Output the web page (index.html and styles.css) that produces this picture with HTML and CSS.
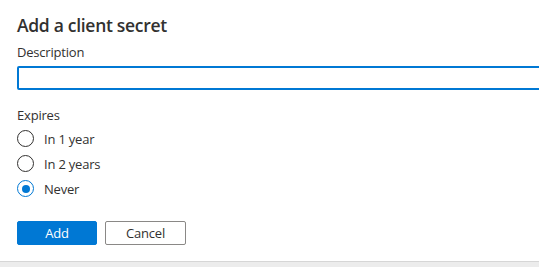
FILE: index.html
```html
<!DOCTYPE html>
<html lang="en">

<head>
    <meta charset="UTF-8">
    <meta name="viewport" content="width=device-width, initial-scale=1.0">
    <title>Add a client secret</title>
    <link rel="stylesheet" href="styles.css">
</head>

<body>

    <div class="panel">
        <h1>Add a client secret</h1>
        <form id="secretForm">
            <label class="field-label" for="description">Description</label>
            <input id="description" class="text-input" type="text">

            <div class="field-label expires">Expires</div>
            <div class="radio-group">
                <label class="radio-row">
                    <input type="radio" name="expires" value="1">
                    <span>In 1 year</span>
                </label>
                <label class="radio-row">
                    <input type="radio" name="expires" value="2">
                    <span>In 2 years</span>
                </label>
                <label class="radio-row">
                    <input type="radio" name="expires" value="never" checked>
                    <span>Never</span>
                </label>
            </div>

            <div class="actions">
                <button type="submit" class="btn btn-primary">Add</button>
                <button type="button" class="btn">Cancel</button>
            </div>
        </form>
    </div>

</body>

</html>
```

FILE: styles.css
```css
* {
    padding: 0;
    margin: 0;
    box-sizing: border-box;
}

html,
body {
    height: 100%;
}

body {
    font-family: "Open Sans", "Noto Sans", sans-serif;
    color: #323130;
    background-color: #ececec;
    overflow: hidden;
}

.panel {
    background-color: #fff;
    padding: 14px 0 16px 17px;
    border-bottom: 1px solid #d6d6d6;
}

h1 {
    font-size: 17.5px;
    line-height: 22px;
    font-weight: 600;
    letter-spacing: -0.3px;
}

.field-label {
    display: block;
    font-size: 13px;
    line-height: 20px;
    margin-top: 6px;
    letter-spacing: -0.2px;
}

.text-input {
    display: block;
    width: calc(100% + 20px);
    height: 24px;
    margin-top: 4px;
    border: 2px solid #0078d4;
    border-radius: 2px;
    outline: none;
    font: inherit;
}

.expires {
    margin-top: 15px;
}

.radio-group {
    margin-top: 1px;
}

.radio-row {
    display: flex;
    align-items: center;
    height: 25px;
    font-size: 13px;
    letter-spacing: -0.2px;
}

.radio-row input {
    appearance: none;
    width: 17px;
    height: 17px;
    border: 1px solid #323130;
    border-radius: 50%;
    margin-right: 10px;
    display: flex;
    align-items: center;
    justify-content: center;
}

.radio-row input:checked {
    border-color: #0078d4;
}

.radio-row input:checked::after {
    content: "";
    width: 8px;
    height: 8px;
    border-radius: 50%;
    background-color: #0078d4;
}

.actions {
    display: flex;
    gap: 8px;
    margin-top: 20px;
}

.btn {
    width: 81px;
    height: 24px;
    border: 1px solid #8a8886;
    border-radius: 2px;
    background-color: #fff;
    color: #323130;
    font-family: inherit;
    font-size: 13px;
    letter-spacing: -0.2px;
}

.btn-primary {
    width: 80px;
    border-color: #0078d4;
    background-color: #0078d4;
    color: #fff;
}
```
